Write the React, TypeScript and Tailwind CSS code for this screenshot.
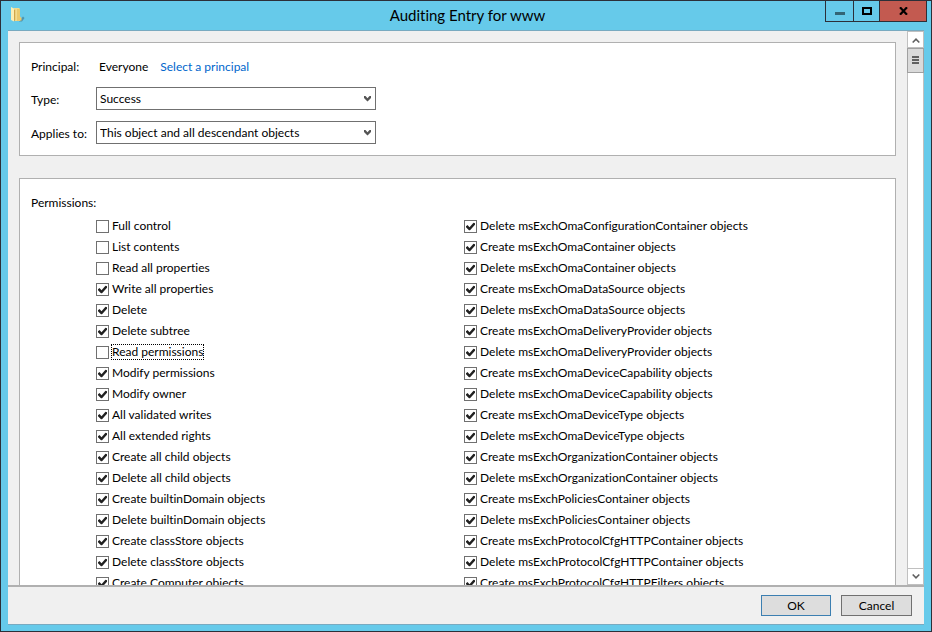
import React, { useState } from "react";

const leftPermissions = [
  "Full control",
  "List contents",
  "Read all properties",
  "Write all properties",
  "Delete",
  "Delete subtree",
  "Read permissions",
  "Modify permissions",
  "Modify owner",
  "All validated writes",
  "All extended rights",
  "Create all child objects",
  "Delete all child objects",
  "Create builtinDomain objects",
  "Delete builtinDomain objects",
  "Create classStore objects",
  "Delete classStore objects",
  "Create Computer objects",
];

const rightPermissions = [
  "Delete msExchOmaConfigurationContainer objects",
  "Create msExchOmaContainer objects",
  "Delete msExchOmaContainer objects",
  "Create msExchOmaDataSource objects",
  "Delete msExchOmaDataSource objects",
  "Create msExchOmaDeliveryProvider objects",
  "Delete msExchOmaDeliveryProvider objects",
  "Create msExchOmaDeviceCapability objects",
  "Delete msExchOmaDeviceCapability objects",
  "Create msExchOmaDeviceType objects",
  "Delete msExchOmaDeviceType objects",
  "Create msExchOrganizationContainer objects",
  "Delete msExchOrganizationContainer objects",
  "Create msExchPoliciesContainer objects",
  "Delete msExchPoliciesContainer objects",
  "Create msExchProtocolCfgHTTPContainer objects",
  "Delete msExchProtocolCfgHTTPContainer objects",
  "Create msExchProtocolCfgHTTPFilters objects",
];

const initiallyOff = ["Full control", "List contents", "Read all properties", "Read permissions"];

function FolderIcon() {
  return (
    <svg className="w-4 h-4" viewBox="0 0 16 16" aria-hidden="true">
      <path d="M9 13L12 9.500l1.500 1.500-2.500 3.500H8z" fill="#4f93ad" />
      <path d="M3 1h5l1 1v12H4z" fill="#f3db8e" />
      <path d="M6 2h3v7.500l1.500 1.500v2.500L6 14z" fill="#ebc96c" />
      <path d="M0 0l3 1.500V14.500L0 13z" fill="#fbeeb4" />
      <path d="M3 3l1.200-0.500V13L3 14.500z" fill="#cfa54a" />
    </svg>
  );
}

function SelectField({ id, label, options }: { id: string; label: string; options: string[] }) {
  return (
    <div className="flex items-center h-[23px]">
      <label htmlFor={id} className="w-[65px] shrink-0 pt-0.5">
        {label}
      </label>
      <div className="relative w-[280px]">
        <select
          id={id}
          className="block w-full h-[23px] appearance-none border border-[#707070] bg-white pl-[3px] pr-5 text-black outline-none"
        >
          {options.map((option) => (
            <option key={option}>{option}</option>
          ))}
        </select>
        <svg
          className="absolute right-1 top-2 w-2 h-2 pointer-events-none"
          viewBox="0 0 8 8"
          fill="#555"
          aria-hidden="true"
        >
          <path d="M0 1H1.500L3.500 3.200L5.500 1H7v2L3.500 6.500 0 3z" />
        </svg>
      </div>
    </div>
  );
}

interface PermissionProps {
  name: string;
  checked: boolean;
  focused: boolean;
  onToggle: (name: string) => void;
}

function Permission({ name, checked, focused, onToggle }: PermissionProps) {
  return (
    <label className="flex items-start h-[21px]">
      <span className="relative mt-1 block w-[13px] h-[13px] shrink-0">
        <input
          type="checkbox"
          checked={checked}
          onChange={() => onToggle(name)}
          className="peer block w-full h-full appearance-none border border-[#707070] bg-white outline-none"
        />
        <svg
          className="absolute inset-0 hidden peer-checked:block pointer-events-none"
          viewBox="0 0 13 13"
          fill="#212121"
          aria-hidden="true"
        >
          <path d="M2 6.200L3.500 5l2 2.300L9.500 2.800 11 3.200V4.800L6 10.300H5L2 7.200z" />
        </svg>
      </span>
      <span
        className={`mt-0.5 ml-0.5 h-4 leading-[14px] border border-dotted whitespace-nowrap ${
          focused ? "border-black" : "border-transparent"
        }`}
      >
        {name}
      </span>
    </label>
  );
}

function ScrollBar() {
  return (
    <div className="flex flex-col w-[17px] shrink-0 border-x border-[#c0c0c0] bg-white">
      <button className="h-[17px] flex items-center justify-center border-y border-[#c0c0c0]" aria-label="Scroll up">
        <svg className="w-2 h-2" viewBox="0 0 8 8" fill="none" stroke="#606060" strokeWidth="1.6" aria-hidden="true">
          <path d="M0.7 6.500L4 3.200L7.3 6.500" />
        </svg>
      </button>
      <div className="-mx-px h-[25px] pb-0.5 flex flex-col items-center justify-center gap-px border border-[#a0a0a0] bg-[#dadada]">
        <span className="w-[7px] h-0.5 bg-[#606060]" />
        <span className="w-[7px] h-0.5 bg-[#606060]" />
        <span className="w-[7px] h-0.5 bg-[#606060]" />
      </div>
      <div className="flex-1" />
      <button className="h-[17px] flex items-center justify-center border-y border-[#c0c0c0]" aria-label="Scroll down">
        <svg className="w-2 h-2" viewBox="0 0 8 8" fill="none" stroke="#606060" strokeWidth="1.6" aria-hidden="true">
          <path d="M0.7 1.500L4 4.800L7.3 1.500" />
        </svg>
      </button>
    </div>
  );
}

export default function App() {
  const [off, setOff] = useState<Set<string>>(new Set(initiallyOff));
  const [focusedName, setFocusedName] = useState("Read permissions");

  const toggle = (name: string) => {
    setFocusedName(name);
    setOff((prev) => {
      const copy = new Set(prev);
      if (copy.has(name)) copy.delete(name);
      else copy.add(name);
      return copy;
    });
  };

  const renderColumn = (names: string[]) => (
    <div className="flex-1">
      {names.map((name) => (
        <Permission
          key={name}
          name={name}
          checked={!off.has(name)}
          focused={name === focusedName}
          onToggle={toggle}
        />
      ))}
    </div>
  );

  return (
    <div className="h-screen flex flex-col border border-[#2c2f38] bg-[#66caea] px-[7px] pb-1.5 font-['Lato','Open_Sans',sans-serif] [font-variant-ligatures:none] text-[12px] leading-4 text-black">
      {/* Title bar */}
      <header className="flex h-[29px] shrink-0">
        <div className="w-[102px] pt-1.5 pl-[3px]">
          <FolderIcon />
        </div>
        <h1 className="flex-1 pt-1 text-center text-[15px] leading-5">Auditing Entry for www</h1>
        <div className="flex h-[22px] -mt-px -mr-[3px] border border-[#2c2f38] divide-x divide-[#2c2f38]">
          <button className="w-7 flex items-center justify-center" aria-label="Minimize">
            <span className="w-2.5 h-[3px] mt-1 bg-[#336575]" />
          </button>
          <button className="w-[26px] flex items-center justify-center" aria-label="Maximize">
            <span className="w-2.5 h-2 border-2 border-black" />
          </button>
          <button className="w-[46px] flex items-center justify-center bg-[#c35a50]" aria-label="Close">
            <svg className="w-[9px] h-2" viewBox="0 0 9 8" fill="none" stroke="#000" strokeWidth="2.2" aria-hidden="true">
              <path d="M1 0.3L8 7.7M8 0.3L1 7.7" />
            </svg>
          </button>
        </div>
      </header>

      <div className="flex-1 min-h-0 flex flex-col border-y border-[#79aac0] bg-[#f0f0f0]">
        <div className="flex-1 min-h-0 flex">
          <main className="flex-1 overflow-hidden pl-[11px] pr-[11px] pt-[11px]">
            <section className="border border-[#b0b0b0] bg-white pl-[11px] pt-3 pb-[11px] mb-[22px]">
              <div className="flex items-center h-[23px] mb-[9px]">
                <span className="w-[68px]">Principal:</span>
                <span className="mr-3">Everyone</span>
                <a href="#principal" className="text-[#0066cc]">
                  Select a principal
                </a>
              </div>
              <div className="flex flex-col gap-[11px]">
                <SelectField id="type" label="Type:" options={["Success", "Fail", "All"]} />
                <SelectField
                  id="applies"
                  label="Applies to:"
                  options={["This object and all descendant objects", "This object only", "All descendant objects"]}
                />
              </div>
            </section>

            <section className="border border-[#b0b0b0] bg-white pl-[11px] pt-4">
              <h2 className="mb-[5px]">Permissions:</h2>
              <div className="flex pl-[65px] pr-[63px]">
                {renderColumn(leftPermissions)}
                {renderColumn(rightPermissions)}
              </div>
            </section>
          </main>
          <ScrollBar />
        </div>

        {/* Dialog buttons */}
        <footer className="flex justify-end gap-2.5 border-t-2 border-[#b0b0b0] pt-2 pr-3 pb-2">
          <button className="w-[70px] h-[21px] border border-[#3c7fb1] bg-[#dddddd]">OK</button>
          <button className="w-[71px] h-[21px] border border-[#707070] bg-[#dddddd]">Cancel</button>
        </footer>
      </div>
    </div>
  );
}
